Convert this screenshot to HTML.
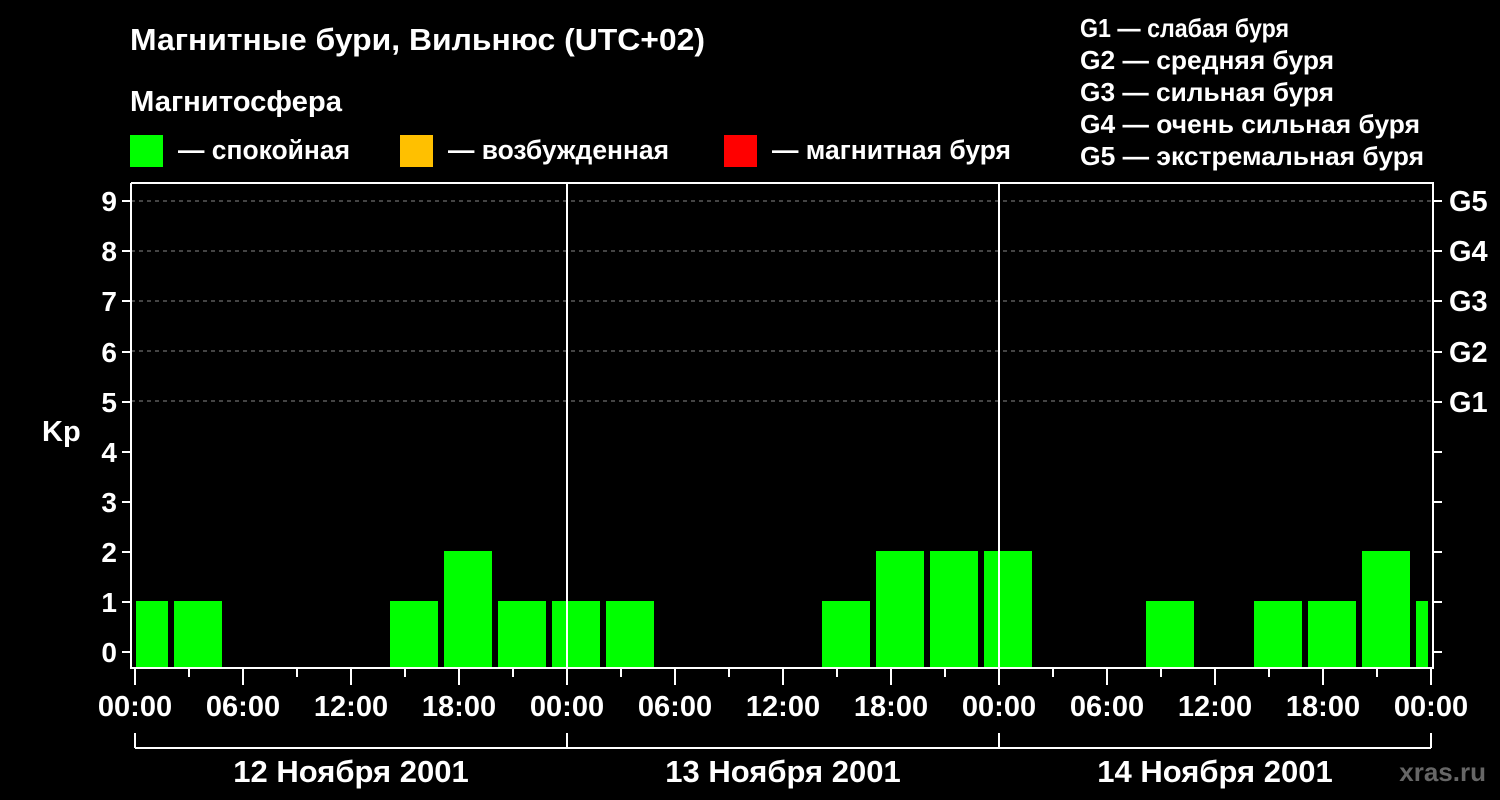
<!DOCTYPE html>
<html><head><meta charset="utf-8"><style>html,body{margin:0;padding:0;background:#000;}svg{display:block}</style></head>
<body>
<svg width="1500" height="800" xmlns="http://www.w3.org/2000/svg" font-family="Liberation Sans, Arial, sans-serif" font-weight="bold" fill="#fff">
<rect width="1500" height="800" fill="#000"/>
<text x="130" y="50" font-size="31" textLength="575" lengthAdjust="spacingAndGlyphs">Магнитные бури, Вильнюс (UTC+02)</text>
<text x="130" y="111" font-size="29" textLength="212" lengthAdjust="spacingAndGlyphs">Магнитосфера</text>
<rect x="130" y="135" width="33" height="32" fill="#00ff00"/>
<text x="178" y="159" font-size="27" textLength="172" lengthAdjust="spacingAndGlyphs">— спокойная</text>
<rect x="400" y="135" width="33" height="32" fill="#ffc000"/>
<text x="448" y="159" font-size="27" textLength="221" lengthAdjust="spacingAndGlyphs">— возбужденная</text>
<rect x="724" y="135" width="33" height="32" fill="#ff0000"/>
<text x="772" y="159" font-size="27" textLength="239" lengthAdjust="spacingAndGlyphs">— магнитная буря</text>
<g font-size="26">
<text x="1080" y="37" textLength="209" lengthAdjust="spacingAndGlyphs">G1 — слабая буря</text>
<text x="1080" y="69" textLength="254" lengthAdjust="spacingAndGlyphs">G2 — средняя буря</text>
<text x="1080" y="101" textLength="254" lengthAdjust="spacingAndGlyphs">G3 — сильная буря</text>
<text x="1080" y="133" textLength="340" lengthAdjust="spacingAndGlyphs">G4 — очень сильная буря</text>
<text x="1080" y="165" textLength="344" lengthAdjust="spacingAndGlyphs">G5 — экстремальная буря</text>
</g>
<g stroke="#888" stroke-width="1" stroke-dasharray="4,4">
<line x1="131" y1="201" x2="1433" y2="201"/>
<line x1="131" y1="251" x2="1433" y2="251"/>
<line x1="131" y1="301" x2="1433" y2="301"/>
<line x1="131" y1="351" x2="1433" y2="351"/>
<line x1="131" y1="401" x2="1433" y2="401"/>
</g>
<g fill="#00ff00">
<rect x="136" y="601" width="32" height="67"/>
<rect x="174" y="601" width="48" height="67"/>
<rect x="390" y="601" width="48" height="67"/>
<rect x="444" y="551" width="48" height="117"/>
<rect x="498" y="601" width="48" height="67"/>
<rect x="552" y="601" width="48" height="67"/>
<rect x="606" y="601" width="48" height="67"/>
<rect x="822" y="601" width="48" height="67"/>
<rect x="876" y="551" width="48" height="117"/>
<rect x="930" y="551" width="48" height="117"/>
<rect x="984" y="551" width="48" height="117"/>
<rect x="1146" y="601" width="48" height="67"/>
<rect x="1254" y="601" width="48" height="67"/>
<rect x="1308" y="601" width="48" height="67"/>
<rect x="1362" y="551" width="48" height="117"/>
<rect x="1416" y="601" width="12" height="67"/>
</g>
<g stroke="#fff" stroke-width="2" fill="none">
<path d="M131 183 V668 H1433 V183 H131"/>
<line x1="567" y1="183" x2="567" y2="668"/>
<line x1="999" y1="183" x2="999" y2="668"/>
<path d="M122 652H131M122 602H131M122 552H131M122 502H131M122 452H131M122 402H131M122 352H131M122 301H131M122 251H131M122 201H131"/>
<path d="M1433 652H1442M1433 602H1442M1433 552H1442M1433 502H1442M1433 452H1442M1433 402H1442M1433 352H1442M1433 301H1442M1433 251H1442M1433 201H1442"/>
<path d="M135 748V733M135 748H1431M567 748V733M999 748V733M1431 748V733"/>
</g>
<g stroke="#fff" stroke-width="2">
<path d="M135 669v16M189 669v8M243 669v16M297 669v8M351 669v16M405 669v8M459 669v16M513 669v8M567 669v16M621 669v8M675 669v16M729 669v8M783 669v16M837 669v8M891 669v16M945 669v8M999 669v16M1053 669v8M1107 669v16M1161 669v8M1215 669v16M1269 669v8M1323 669v16M1377 669v8M1431 669v16"/>
</g>
<g font-size="28" text-anchor="end">
<text x="117" y="662">0</text><text x="117" y="612">1</text><text x="117" y="562">2</text><text x="117" y="512">3</text><text x="117" y="462">4</text><text x="117" y="412">5</text><text x="117" y="362">6</text><text x="117" y="311">7</text><text x="117" y="261">8</text><text x="117" y="211">9</text>
</g>
<text x="42" y="441" font-size="29">Kp</text>
<g font-size="29">
<text x="1449" y="412">G1</text><text x="1449" y="362">G2</text><text x="1449" y="311">G3</text><text x="1449" y="261">G4</text><text x="1449" y="211">G5</text>
</g>
<g font-size="29" text-anchor="middle">
<text x="135" y="716">00:00</text><text x="243" y="716">06:00</text><text x="351" y="716">12:00</text><text x="459" y="716">18:00</text>
<text x="567" y="716">00:00</text><text x="675" y="716">06:00</text><text x="783" y="716">12:00</text><text x="891" y="716">18:00</text>
<text x="999" y="716">00:00</text><text x="1107" y="716">06:00</text><text x="1215" y="716">12:00</text><text x="1323" y="716">18:00</text>
<text x="1431" y="716">00:00</text>
</g>
<g font-size="31" text-anchor="middle">
<text x="351" y="782">12 Ноября 2001</text>
<text x="783" y="782">13 Ноября 2001</text>
<text x="1215" y="782">14 Ноября 2001</text>
</g>
<text x="1486" y="781" font-size="26" fill="#666" text-anchor="end">xras.ru</text>
</svg>
</body></html>
